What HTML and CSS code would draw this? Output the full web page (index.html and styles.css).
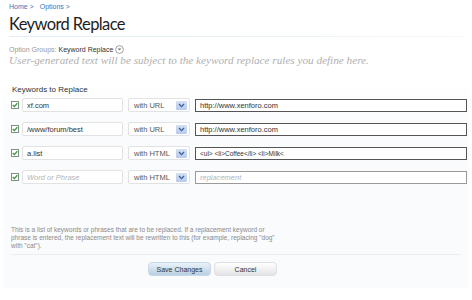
FILE: index.html
```html
<!DOCTYPE html>
<html>
<head>
<meta charset="utf-8">
<link rel="stylesheet" href="styles.css">
</head>
<body>
<div class="page">
  <div class="breadcrumb"><span class="crumb">Home &gt;</span><span class="crumb">Options &gt;</span></div>
  <h1 class="title">Keyword Replace</h1>
  <div class="title-rule"></div>
  <div class="groups">Option Groups: <span class="group-name">Keyword Replace</span>
    <svg class="group-icon" width="9" height="9" viewBox="0 0 9 9"><circle cx="4.5" cy="4.5" r="3.9" fill="#fff" stroke="#8a8a8a" stroke-width="0.8"/><path d="M2.6 3.6 L4.5 5.6 L6.4 3.6 Z" fill="#777"/></svg>
  </div>
  <p class="explain">User-generated text will be subject to the keyword replace rules you define here.</p>
</div>
<form class="form">
  <div class="legend">Keywords to Replace</div>
  <div class="rows">
    <div class="row">
      <span class="check"><svg width="8" height="8" viewBox="0 0 8 8"><rect x="0.5" y="0.5" width="7" height="7" fill="#fff" stroke="#7f8f86"/><path d="M1.8 4 L3.3 5.6 L6.3 2.2" fill="none" stroke="#2f9a2f" stroke-width="1.3"/></svg></span>
      <span class="field kw">xf.com</span>
      <span class="select"><span class="select-text">with URL</span><span class="arrow"><svg width="7" height="5" viewBox="0 0 7 5"><path d="M1 1 L3.5 3.6 L6 1" fill="none" stroke="#3c5b9a" stroke-width="1.3"/></svg></span></span>
      <span class="field rep active">http://www.xenforo.com</span>
    </div>
    <div class="row">
      <span class="check"><svg width="8" height="8" viewBox="0 0 8 8"><rect x="0.5" y="0.5" width="7" height="7" fill="#fff" stroke="#7f8f86"/><path d="M1.8 4 L3.3 5.6 L6.3 2.2" fill="none" stroke="#2f9a2f" stroke-width="1.3"/></svg></span>
      <span class="field kw">/www/forum/best</span>
      <span class="select"><span class="select-text">with URL</span><span class="arrow"><svg width="7" height="5" viewBox="0 0 7 5"><path d="M1 1 L3.5 3.6 L6 1" fill="none" stroke="#3c5b9a" stroke-width="1.3"/></svg></span></span>
      <span class="field rep active">http://www.xenforo.com</span>
    </div>
    <div class="row">
      <span class="check"><svg width="8" height="8" viewBox="0 0 8 8"><rect x="0.5" y="0.5" width="7" height="7" fill="#fff" stroke="#7f8f86"/><path d="M1.8 4 L3.3 5.6 L6.3 2.2" fill="none" stroke="#2f9a2f" stroke-width="1.3"/></svg></span>
      <span class="field kw">a.list</span>
      <span class="select"><span class="select-text">with HTML</span><span class="arrow"><svg width="7" height="5" viewBox="0 0 7 5"><path d="M1 1 L3.5 3.6 L6 1" fill="none" stroke="#3c5b9a" stroke-width="1.3"/></svg></span></span>
      <span class="field rep active code">&lt;ul&gt; &lt;li&gt;Coffee&lt;/li&gt; &lt;li&gt;Milk&lt;</span>
    </div>
    <div class="row">
      <span class="check"><svg width="8" height="8" viewBox="0 0 8 8"><rect x="0.5" y="0.5" width="7" height="7" fill="#fff" stroke="#7f8f86"/><path d="M1.8 4 L3.3 5.6 L6.3 2.2" fill="none" stroke="#2f9a2f" stroke-width="1.3"/></svg></span>
      <span class="field kw placeholder">Word or Phrase</span>
      <span class="select"><span class="select-text">with HTML</span><span class="arrow"><svg width="7" height="5" viewBox="0 0 7 5"><path d="M1 1 L3.5 3.6 L6 1" fill="none" stroke="#3c5b9a" stroke-width="1.3"/></svg></span></span>
      <span class="field rep idle placeholder">replacement</span>
    </div>
  </div>
  <p class="desc">This is a list of keywords or phrases that are to be replaced. If a replacement keyword or<br>phrase is entered, the replacement text will be rewritten to this (for example, replacing "dog"<br>with "cat").</p>
  <div class="submit-row">
    <span class="button primary">Save Changes</span>
    <span class="button">Cancel</span>
  </div>
</form>
</body>
</html>
```
FILE: styles.css
```css
html, body {
  margin: 0;
  padding: 0;
  background: #ffffff;
}
body {
  font-family: "Liberation Sans", Arial, sans-serif;
  color: #222;
}
.page {
  padding: 3px 9px 0 9px;
}
.breadcrumb {
  display: flex;
  gap: 6px;
  font-size: 7px;
  line-height: 8px;
  color: #3b73b9;
}
.title {
  margin: 3px 0 0 0;
  font-family: Lato, sans-serif;
  font-weight: 400;
  font-size: 16.5px;
  line-height: 21px;
  letter-spacing: -0.6px;
  color: #1e1e1e;
}
.title-rule {
  height: 1px;
  margin-top: 1px;
  width: 455px;
  background: linear-gradient(to right, #e3edf5, #edf5f0 70%, #f6f9f6);
}
.groups {
  display: flex;
  align-items: center;
  margin-top: 8px;
  font-size: 7px;
  line-height: 9px;
  color: #999;
}
.group-name {
  color: #333;
  margin-left: 2px;
}
.group-icon {
  margin-left: 2px;
}
.explain {
  margin: 0 0 0 0;
  font-family: "Liberation Serif", serif;
  font-style: italic;
  font-size: 11.2px;
  line-height: 13px;
  color: #b0b0b0;
}
.form {
  margin: 13px 3px 0 3px;
  padding: 5px 0 12px 0;
  background: linear-gradient(to bottom, #ffffff, #fafbfc 20%, #fafbfc);
}
.legend {
  margin-left: 9px;
  font-size: 8px;
  line-height: 10px;
  color: #333;
}
.rows {
  display: flex;
  flex-direction: column;
  gap: 10px;
  margin-top: 3px;
}
.row {
  display: flex;
  align-items: center;
  height: 14px;
  padding-left: 8px;
}
.check {
  display: flex;
  width: 8px;
  height: 8px;
  margin-right: 3px;
}
.field {
  box-sizing: border-box;
  display: flex;
  align-items: center;
  height: 14px;
  padding-left: 4px;
  font-size: 7.5px;
  color: #333;
  background: #fff;
  white-space: nowrap;
  overflow: hidden;
}
.kw {
  width: 101px;
  border: 1px solid #e2e2e2;
  border-radius: 2px;
}
.select {
  box-sizing: border-box;
  display: flex;
  align-items: center;
  justify-content: space-between;
  width: 62px;
  height: 14px;
  margin-left: 5px;
  padding: 0 2px 0 5px;
  border: 1px solid #e2e2e2;
  border-radius: 2px;
  background: #fff;
  font-size: 7.5px;
  color: #555;
}
.arrow {
  display: flex;
  align-items: center;
  justify-content: center;
  width: 11px;
  height: 9px;
  background: linear-gradient(#d4e0f3, #b8cbea);
  border-radius: 1px;
}
.rep {
  width: 272px;
  height: 13px;
  margin-left: 5px;
}
.active {
  border: 1px solid #555;
}
.idle {
  border: 1px solid #9a9a9a;
}
.code {
  font-size: 6.5px;
}
.placeholder {
  font-style: italic;
  color: #b5b5b5;
}
.desc {
  margin: 42px 0 0 8px;
  font-size: 6.5px;
  line-height: 8px;
  color: #8a8a8a;
}
.submit-row {
  display: flex;
  gap: 3px;
  margin: 4px 8px 0 8px;
  padding-top: 7px;
  padding-left: 137px;
  border-top: 1px solid #eceef0;
}
.button {
  display: flex;
  align-items: center;
  justify-content: center;
  width: 63px;
  height: 14px;
  border-radius: 4px;
  font-size: 7px;
  color: #333;
  background: linear-gradient(#ffffff, #e4e4e6);
  border: 1px solid #e0e0e0;
  box-sizing: border-box;
}
.primary {
  background: linear-gradient(#eaf2f8, #b8cfe2);
  border-color: #c9d8e6;
}
```
